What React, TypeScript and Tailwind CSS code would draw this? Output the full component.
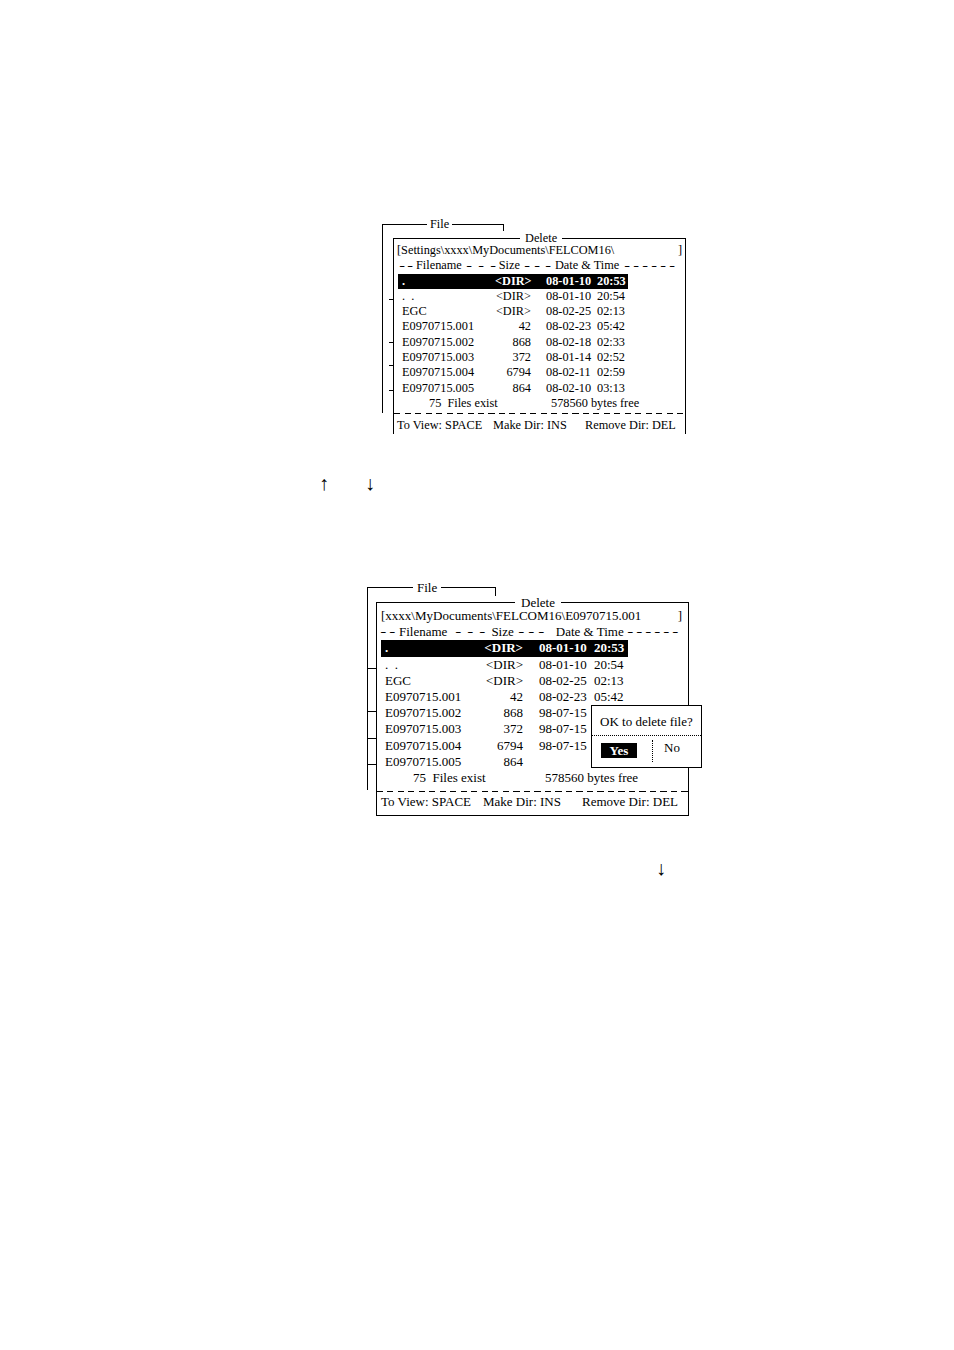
import type { ReactNode } from "react";

type Row = { name: string; size: string; date?: string; time?: string; active?: boolean };

type Cfg = {
  text: string;
  line: string;
  frame: string;
  drop: string;
  fileLabel: string;
  box: string;
  deleteLabel: string;
  content: string;
  pathPr: string;
  rowsWrap: string;
  nameCell: string;
  sizeCell: string;
  dateCell: string;
  footer: string;
  dashed: string;
  bottom: string;
  bottomA: string;
  bottomB: string;
  tickLeft: string;
  ticks: string[];
};

const rows1: Row[] = [
  { name: ".", size: "<DIR>", date: "08-01-10", time: "20:53", active: true },
  { name: ".  .", size: "<DIR>", date: "08-01-10", time: "20:54" },
  { name: "EGC", size: "<DIR>", date: "08-02-25", time: "02:13" },
  { name: "E0970715.001", size: "42", date: "08-02-23", time: "05:42" },
  { name: "E0970715.002", size: "868", date: "08-02-18", time: "02:33" },
  { name: "E0970715.003", size: "372", date: "08-01-14", time: "02:52" },
  { name: "E0970715.004", size: "6794", date: "08-02-11", time: "02:59" },
  { name: "E0970715.005", size: "864", date: "08-02-10", time: "03:13" },
];

const rows2: Row[] = [
  { name: ".", size: "<DIR>", date: "08-01-10", time: "20:53", active: true },
  { name: ".  .", size: "<DIR>", date: "08-01-10", time: "20:54" },
  { name: "EGC", size: "<DIR>", date: "08-02-25", time: "02:13" },
  { name: "E0970715.001", size: "42", date: "08-02-23", time: "05:42" },
  { name: "E0970715.002", size: "868", date: "98-07-15" },
  { name: "E0970715.003", size: "372", date: "98-07-15" },
  { name: "E0970715.004", size: "6794", date: "98-07-15" },
  { name: "E0970715.005", size: "864" },
];

const small: Cfg = {
  text: "text-[12.3px]",
  line: "leading-[15.3px]",
  frame: "ml-[382px] w-[122px] h-[189px]",
  drop: "h-[6px]",
  fileLabel: "left-[44px] px-[3px]",
  box: "ml-[10px] mt-[13px] w-[293px] border-l border-t border-r",
  deleteLabel: "left-[126px] px-[5px]",
  content: "pt-[4px] pl-[3px]",
  pathPr: "pr-[3px]",
  rowsWrap: "ml-[1px] w-[230px]",
  nameCell: "w-[97px] pl-[4px]",
  sizeCell: "w-[36px]",
  dateCell: "ml-[15px] w-[51px]",
  footer: "ml-[32px] w-[122px]",
  dashed: "mt-[2px] -ml-[3px]",
  bottom: "mt-[4px]",
  bottomA: "w-[96px]",
  bottomB: "w-[92px]",
  tickLeft: "left-[-5px] w-[4px]",
  ticks: ["top-[60px]", "top-[103px]", "top-[126px]", "top-[151px]"],
};

const large: Cfg = {
  text: "text-[13px]",
  line: "leading-[16.2px]",
  frame: "ml-[367px] w-[129px] h-[203px]",
  drop: "h-[8px]",
  fileLabel: "left-[45px] px-[4px]",
  box: "ml-[8px] mt-[14px] w-[313px] border pb-[5px]",
  deleteLabel: "left-[138px] px-[6px]",
  content: "pt-[5px] pl-[4px]",
  pathPr: "pr-[6px]",
  rowsWrap: "w-[247px]",
  nameCell: "w-[102px] pl-[4px]",
  sizeCell: "w-[40px]",
  dateCell: "ml-[16px] w-[55px]",
  footer: "ml-[32px] w-[132px]",
  dashed: "mt-[5px] -ml-[4px]",
  bottom: "mt-[2px]",
  bottomA: "w-[102px]",
  bottomB: "w-[99px]",
  tickLeft: "left-[-9px] w-[8px]",
  ticks: ["top-[65px]", "top-[108px]", "top-[135px]", "top-[161px]"],
};

function Dashes({ n, className }: { n: number; className: string }) {
  return (
    <span className={`flex justify-between ${className}`}>
      {Array.from({ length: n }).map((_, i) => (
        <span key={i} className="inline-block scale-x-[1.4]">
          -
        </span>
      ))}
    </span>
  );
}

function FileFigure({
  cfg,
  path,
  header,
  rows,
  overlay,
}: {
  cfg: Cfg;
  path: string;
  header: ReactNode;
  rows: Row[];
  overlay?: ReactNode;
}) {
  return (
    <div className={`relative border-l border-t border-black ${cfg.frame}`}>
      <span className={`absolute -top-[8px] bg-white leading-[15px] ${cfg.fileLabel}`}>File</span>
      <div className={`absolute right-0 top-0 w-0 border-r border-black ${cfg.drop}`} />

      <div className={`relative border-black bg-white ${cfg.box}`}>
        <span className={`absolute -top-[8px] bg-white leading-[15px] ${cfg.deleteLabel}`}>Delete</span>
        {cfg.ticks.map((t) => (
          <div key={t} className={`absolute h-px bg-black ${cfg.tickLeft} ${t}`} />
        ))}

        <div className={`${cfg.content} ${cfg.line}`}>
          <div className={`flex justify-between text-black ${cfg.pathPr}`}>
            <span>{path}</span>
            <span>]</span>
          </div>
          <div className="flex">{header}</div>

          <div className={cfg.rowsWrap}>
            {rows.map((r, i) => (
              <div
                key={i}
                className={`flex whitespace-pre ${r.active ? "bg-black font-bold text-white" : ""}`}
              >
                <span className={cfg.nameCell}>{r.name}</span>
                <span className={`text-right ${cfg.sizeCell}`}>{r.size}</span>
                <span className={cfg.dateCell}>{r.date ?? ""}</span>
                <span>{r.time ?? ""}</span>
              </div>
            ))}
          </div>

          <div className="flex">
            <span className={cfg.footer}>75&nbsp; Files exist</span>
            <span>578560 bytes free</span>
          </div>

          <div
            className={`h-px bg-[repeating-linear-gradient(to_right,#000_0px,#000_6px,transparent_6px,transparent_10.5px)] ${cfg.dashed}`}
          />

          <div className={`flex whitespace-nowrap ${cfg.bottom}`}>
            <span className={cfg.bottomA}>To View: SPACE</span>
            <span className={cfg.bottomB}>Make Dir: INS</span>
            <span>Remove Dir: DEL</span>
          </div>
        </div>

        {overlay}
      </div>
    </div>
  );
}

function ConfirmDialog() {
  return (
    <div className="absolute left-[214px] top-[102px] flex h-[63px] w-[111px] flex-col border border-black bg-white">
      <div className="h-[30px] border-b border-dotted border-black pl-[8px] pt-[8px] leading-[16px]">
        OK to delete file?
      </div>
      <div className="flex">
        <div className="w-[60px]">
          <div className="ml-[9px] mt-[7px] h-[15px] w-[36px] bg-black text-center font-bold leading-[15px] text-white">
            Yes
          </div>
        </div>
        <div className="mt-[4px] h-[22px] border-l border-dotted border-black" />
        <div className="ml-[11px] pt-[4px] leading-[16px]">No</div>
      </div>
    </div>
  );
}

export default function App() {
  const header1 = (
    <>
      <Dashes n={2} className="ml-[3px] w-[12px]" />
      <span className="ml-[4px]">Filename</span>
      <Dashes n={3} className="ml-[5px] w-[28px]" />
      <span className="ml-[4px]">Size</span>
      <Dashes n={3} className="ml-[5px] w-[25px]" />
      <span className="ml-[5px]">Date &amp; Time</span>
      <Dashes n={6} className="ml-[6px] w-[49px]" />
    </>
  );

  const header2 = (
    <>
      <Dashes n={2} className="w-[13px]" />
      <span className="ml-[5px]">Filename</span>
      <Dashes n={3} className="ml-[9px] w-[28px]" />
      <span className="ml-[7px]">Size</span>
      <Dashes n={3} className="ml-[5px] w-[25px]" />
      <span className="ml-[12px]">Date &amp; Time</span>
      <Dashes n={6} className="ml-[4px] w-[50px]" />
    </>
  );

  return (
    <div className="h-[1350px] w-[954px] overflow-hidden bg-white pt-[224px] font-['Liberation_Serif','Times_New_Roman',serif] text-black">
      <div className="text-[12.3px]">
        <FileFigure
          cfg={small}
          path="[Settings\xxxx\MyDocuments\FELCOM16\"
          header={header1}
          rows={rows1}
        />
      </div>

      <div className="mt-[60px] flex text-[20px] leading-[20px]">
        <span className="ml-[314px] w-[20px] text-center">↑</span>
        <span className="ml-[26px] w-[20px] text-center">↓</span>
      </div>

      <div className="mt-[94px] text-[13px]">
        <FileFigure
          cfg={large}
          path="[xxxx\MyDocuments\FELCOM16\E0970715.001"
          header={header2}
          rows={rows2}
          overlay={<ConfirmDialog />}
        />
      </div>

      <div className="mt-[68px] flex text-[20px] leading-[20px]">
        <span className="ml-[651px] w-[20px] text-center">↓</span>
      </div>
    </div>
  );
}
